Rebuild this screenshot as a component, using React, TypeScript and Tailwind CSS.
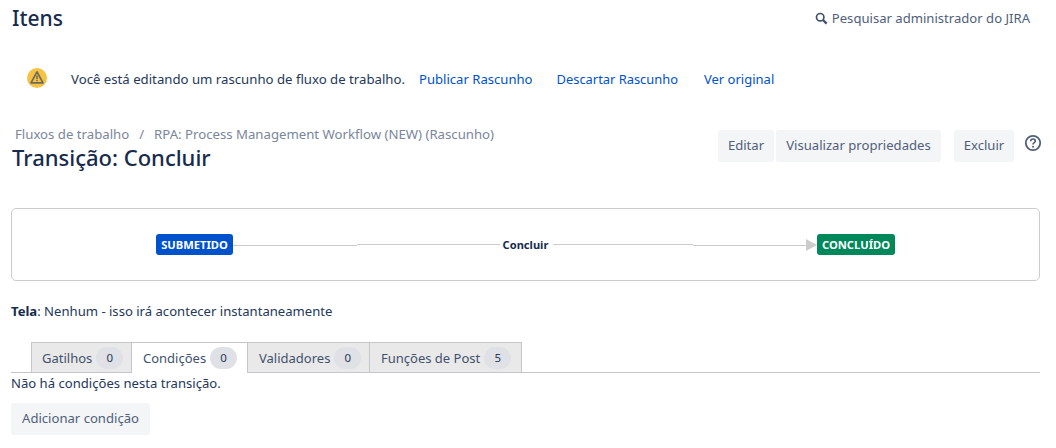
import React from "react";

const F = "font-['Noto_Sans','Open_Sans',sans-serif]";

function Tab({ label, n, active, w }: { label: string; n: number; active?: boolean; w: string }) {
  return (
    <div
      className={`${w} flex items-center pl-[11px] first:pl-[10px] gap-[4px] border-t border-r border-[#c4c6cb] first:border-l ${
        active ? "bg-white -mb-px h-[31px] z-10" : "bg-[#e9e9e9] h-[30px] pt-[1px]"
      }`}
    >
      <span className="text-[13px] text-[#42526e] leading-none">{label}</span>
      <span className="w-[27px] h-[22px] rounded-full bg-[#dfe1e6] flex items-center justify-center text-[11.5px] text-[#253858] leading-none">
        {n}
      </span>
    </div>
  );
}

function Btn({ children, className = "" }: { children: React.ReactNode; className?: string }) {
  return (
    <div className={`h-[32px] flex items-center justify-center rounded-[3px] bg-[#f4f5f7] text-[13.1px] text-[#505f79] ${className}`}>
      {children}
    </div>
  );
}

export default function App() {
  return (
    <div className={`${F} w-[1056px] h-[448px] bg-white overflow-hidden text-[#172b4d] px-[11px]`}>
      <div className="flex items-center justify-between h-[37px]">
        <h1 className="text-[21px] font-medium text-[#172b4d] leading-none pl-[1px]">Itens</h1>
        <div className="flex items-center gap-[4px] pr-[15px] pt-[1px] text-[13.1px] text-[#505f79]">
          <svg width="13" height="13" viewBox="0 0 13 13" fill="none" stroke="#42526e">
            <circle cx="5.2" cy="5.2" r="3.7" strokeWidth="1.7" />
            <path d="M8 8l3.6 3.6" strokeWidth="2.4" />
          </svg>
          Pesquisar administrador do JIRA
        </div>
      </div>

      <div className="flex items-center h-[84px] pl-[16px] pt-[1px] text-[13.2px]">
        <svg width="20" height="20" viewBox="0 0 20 20" className="mr-[24px] mb-[4px]">
          <circle cx="10" cy="10" r="10" fill="#f6c244" />
          <path d="M10 3.8L16 14.8H4Z" fill="none" stroke="#6b6a5c" strokeWidth="1.7" strokeLinejoin="round" />
          <path d="M10 7.6v3.6M10 12v1.2" stroke="#6b6a5c" strokeWidth="1.5" />
        </svg>
        <span className="text-[#253858]">Você está editando um rascunho de fluxo de trabalho.</span>
        <span className="text-[#0052cc] ml-[14px] text-[13.1px]">Publicar Rascunho</span>
        <span className="text-[#0052cc] ml-[24px] text-[12.9px]">Descartar Rascunho</span>
        <span className="text-[#0052cc] ml-[26px] text-[13px]">Ver original</span>
      </div>

      <div className="flex justify-between h-[87px] pt-[9px]">
        <div className="-mt-[6px]">
          <div className="text-[13.2px] text-[#7a869a] pl-[4px] leading-[20px] flex">
            <span>Fluxos de trabalho</span>
            <span className="mx-[10px]">/</span>
            <span>RPA: Process Management Workflow (NEW) (Rascunho)</span>
          </div>
          <h2 className="text-[22px] font-medium leading-[27px] pl-[1px]">Transição: Concluir</h2>
        </div>
        <div className="flex items-start">
          <Btn className="w-[56px]">Editar</Btn>
          <Btn className="w-[165px] ml-[2px]">Visualizar propriedades</Btn>
          <Btn className="w-[60px] ml-[13px]">Excluir</Btn>
          <svg width="18" height="18" viewBox="0 0 18 18" fill="none" className="ml-[10px] mr-[3px] mt-[4px]">
            <circle cx="9" cy="9" r="7.2" stroke="#505f79" strokeWidth="1.8" />
            <path d="M6.7 7.2c0-1.4 1-2.2 2.3-2.2s2.3.8 2.3 2c0 1.7-2.3 1.6-2.3 3.4" stroke="#505f79" strokeWidth="1.7" />
            <circle cx="9" cy="12.7" r="1" fill="#505f79" />
          </svg>
        </div>
      </div>

      <div className="h-[73px] w-[1029px] border border-[#cccccc] rounded-[5px] flex items-center pl-[144px]">
        <span className="h-[21px] w-[77px] rounded-[3px] bg-[#0052cc] text-white text-[11.2px] font-bold flex items-center justify-center leading-none">
          SUBMETIDO
        </span>
        <span className="w-[124px] h-px bg-[#cccccc] mt-[1px]" />
        <span className="w-[143px] h-px bg-[#cccccc]" />
        <span className="w-[53px] pr-[2px] text-[11.1px] font-bold text-[#172b4d] text-center leading-none">Concluir</span>
        <span className="w-[140px] h-px bg-[#cccccc]" />
        <span className="w-[113px] h-px bg-[#cccccc] mt-[1px]" />
        <svg width="11" height="12" viewBox="0 0 11 12" className="mt-[1px]">
          <path d="M0 0L11 6L0 12Z" fill="#cccccc" />
        </svg>
        <span className="h-[21px] w-[78px] rounded-[3px] bg-[#00875a] text-white text-[11.2px] font-bold flex items-center justify-center leading-none">
          CONCLUÍDO
        </span>
      </div>

      <div className="text-[13.1px] text-[#253858] pt-[20px] leading-[20px]">
        <b className="font-bold text-[#172b4d]">Tela</b>: Nenhum - isso irá acontecer instantaneamente
      </div>

      <div className="flex pl-[20px] mt-[21px] w-[1029px] border-b border-[#c4c6cb]">
        <Tab label="Gatilhos" n={0} w="w-[101px]" />
        <Tab label="Condições" n={0} active w="w-[116px]" />
        <Tab label="Validadores" n={0} w="w-[122px]" />
        <Tab label="Funções de Post" n={5} w="w-[152px]" />
      </div>
      <div className="text-[13.1px] text-[#253858] leading-[20px]">Não há condições nesta transição.</div>
      <Btn className="w-[139px] mt-[10px]">Adicionar condição</Btn>
    </div>
  );
}
